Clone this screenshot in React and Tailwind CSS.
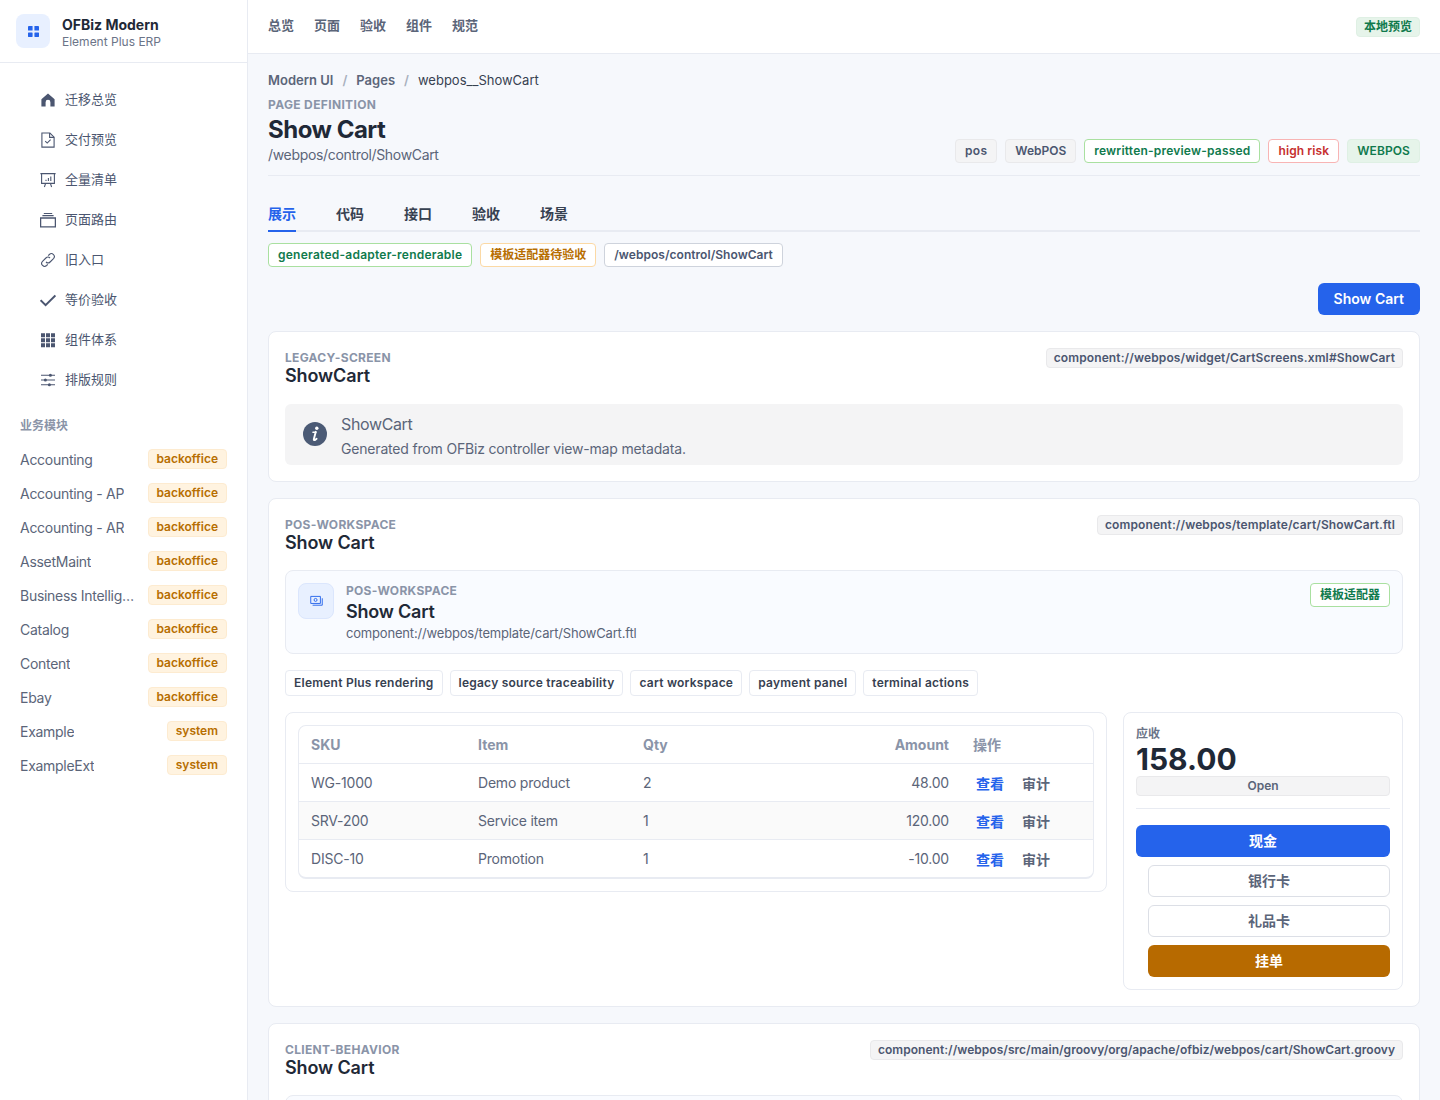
import React from "react";

const I = ({ children, vb = "0 0 16 16" }) => (
  <svg viewBox={vb} className="w-4 h-4 shrink-0 text-[#4b5670]" fill="none" stroke="currentColor" strokeWidth="1.1">
    {children}
  </svg>
);

const icons = [
  <I><path d="M8 1.5 14.6 7.2v7.3H10.4V10.2a2.4 2.4 0 0 0-4.8 0v4.3H1.4V7.2Z" fill="currentColor" stroke="none" /></I>,
  <I><path d="M1.9 1h8l4.2 4.2v9.9H1.9Z" /><path d="M9.6 1v4.4h4.5" /><path d="m5.2 9.2 2 1.9 3.4-3.4" /></I>,
  <I><path d="M.4 1.6h15.2M1.6 1.6v9.8h12.8V1.6M5.6 11.4 4.4 15M10.4 11.4l1.2 3.6" /><path d="M6 9V7.8M8.4 9V6M10.8 9V4.6" /></I>,
  <I><path d="M.6 6h14.8v8.8H.6Z" strokeWidth="1.3" /><path d="M2.4 3.6h11.2M3.8 1.5h8.4" /></I>,
  <I><path d="M6 10a2.9 2.9 0 0 0 4.1 0l3.4-3.4a2.9 2.9 0 0 0-4.1-4.1L8.2 3.7" /><path d="M10 6a2.9 2.9 0 0 0-4.1 0L2.5 9.4a2.9 2.9 0 0 0 4.1 4.1l1.2-1.2" /></I>,
  <I><path d="m.6 8.2 5 5L15.4 3.4" strokeWidth="2" /></I>,
  <I><path d="M1 1.2h4v4H1ZM6 1.2h4v4H6ZM11 1.2h4v4h-4ZM1 6.2h4v4H1ZM6 6.2h4v4H6ZM11 6.2h4v4h-4ZM1 11.2h4v4H1ZM6 11.2h4v4H6ZM11 11.2h4v4h-4Z" fill="currentColor" stroke="none" /></I>,
  <I><path d="M1 3.2h14M1 8h14M1 12.8h14" /><circle cx="10.4" cy="3.2" r="1.5" fill="currentColor" stroke="none" /><circle cx="5.4" cy="8" r="1.5" fill="currentColor" stroke="none" /><circle cx="9.4" cy="12.8" r="1.5" fill="currentColor" stroke="none" /></I>,
];

const menu = ["迁移总览", "交付预览", "全量清单", "页面路由", "旧入口", "等价验收", "组件体系", "排版规则"];
const modules = [
  ["Accounting", "backoffice"], ["Accounting - AP", "backoffice"], ["Accounting - AR", "backoffice"],
  ["AssetMaint", "backoffice"], ["Business Intelligence", "backoffice"], ["Catalog", "backoffice"],
  ["Content", "backoffice"], ["Ebay", "backoffice"], ["Example", "system"], ["ExampleExt", "system"],
];
const rows = [
  ["WG-1000", "Demo product", "2", "48.00"],
  ["SRV-200", "Service item", "1", "120.00"],
  ["DISC-10", "Promotion", "1", "-10.00"],
];

function Sidebar() {
  return (
    <aside className="w-[248px] shrink-0 h-screen bg-white border-r border-[#e8ebf2] flex flex-col">
      <div className="h-[63px] shrink-0 border-b border-[#e8ebf2] flex items-center gap-3 pl-4">
        <div className="w-[34px] h-[34px] rounded-lg bg-[#e8f0ff] flex items-center justify-center">
          <svg viewBox="0 0 12 12" className="w-[11px] h-[11px] text-[#2563eb]" fill="currentColor">
            <rect x="0" y="0" width="5" height="5" rx=".5" /><rect x="7" y="0" width="5" height="5" rx=".5" />
            <rect x="0" y="7" width="5" height="5" rx=".5" /><rect x="7" y="7" width="5" height="5" rx=".5" />
          </svg>
        </div>
        <div className="pt-[2px]">
          <div className="text-sm font-bold leading-[18px] text-[#1f2937]">OFBiz Modern</div>
          <div className="text-xs leading-[15px] text-[#6b7488]">Element Plus ERP</div>
        </div>
      </div>
      <nav className="pt-[17px]">
        {menu.map((m, i) => (
          <div key={m} className="h-10 pl-10 flex items-center gap-[9px] text-[13px] text-[#4b5670]">
            {icons[i]}
            <span>{m}</span>
          </div>
        ))}
      </nav>
      <div className="px-5 pt-[18px] pb-[9px] text-xs font-semibold leading-[16px] text-[#8a94a8]">业务模块</div>
      <div className="pl-5 pr-5">
        {modules.map(([n, b]) => (
          <div key={n} className="h-[34px] flex items-center justify-between gap-3">
            <span className="text-sm tracking-[-0.28px] text-[#5b6579] truncate">{n}</span>
            <span className="shrink-0 h-5 px-2 rounded bg-[#fff3e0] border border-[#fdebd0] text-xs font-semibold leading-[17px] text-[#b76e00] -translate-y-px">{b}</span>
          </div>
        ))}
      </div>
    </aside>
  );
}

const Tag = ({ className, children }) => (
  <span className={"h-6 px-[9px] rounded border text-xs font-semibold leading-[22px] whitespace-nowrap " + className}>{children}</span>
);

const SoftGray = "bg-[#f4f4f5] border-[#e9e9eb] text-[#4b5670]";
const Path = ({ children, className }) => (
  <span className={"h-5 px-[7px] rounded bg-[#f4f4f5] border border-[#e9e9eb] text-xs font-semibold leading-[18px] text-[#4b5670] whitespace-nowrap " + className}>{children}</span>
);

const CardHead = ({ label, title, path, pathClass }) => (
  <div className="flex items-start justify-between">
    <div>
      <div className="text-xs font-bold tracking-[0.3px] leading-[16px] text-[#8a94a8] mt-[2px]">{label}</div>
      <div className="text-lg font-semibold tracking-[-0.12px] leading-[22px] -mt-[1px] text-[#1f2937]">{title}</div>
    </div>
    <Path className={pathClass}>{path}</Path>
  </div>
);

function Workspace() {
  return (
    <div className="mt-[16px] flex gap-4 items-start">
      <div className="flex-1 min-w-0 rounded-lg border border-[#e8ebf2] bg-white p-3">
        <div className="rounded-lg border border-[#e8ebf2] border-b-2 overflow-hidden">
          <table className="w-full table-fixed text-sm tracking-[-0.2px] text-[#5b6579]">
            <colgroup>
              <col className="w-[167px]" /><col className="w-[165px]" /><col className="w-[150px]" /><col className="w-[180px]" /><col />
            </colgroup>
            <thead>
              <tr className="h-[37px] border-b border-[#e8ebf2] text-[#8a94a8]">
                <th className="text-left font-bold tracking-[0px] px-3 pt-[2px]">SKU</th>
                <th className="text-left font-bold tracking-[0px] px-3 pt-[2px]">Item</th>
                <th className="text-left font-bold tracking-[0px] px-3 pt-[2px]">Qty</th>
                <th className="text-right font-bold tracking-[0px] px-3 pt-[2px]">Amount</th>
                <th className="text-left font-semibold tracking-[0px] px-3 pt-[2px]">操作</th>
              </tr>
            </thead>
            <tbody>
              {rows.map((r, i) => (
                <tr key={r[0]} className={"h-[38px] " + (i === 1 ? "bg-[#fafafa] " : "") + (i < 2 ? "border-b border-[#e8ebf2]" : "")}>
                  <td className="px-3 pt-[2px]">{r[0]}</td>
                  <td className="px-3 pt-[2px]">{r[1]}</td>
                  <td className="px-3 pt-[2px]">{r[2]}</td>
                  <td className="px-3 pt-[2px] text-right">{r[3]}</td>
                  <td className="px-3 pt-[2px]">
                    <div className="flex gap-[18px] pl-[3px] font-semibold tracking-[0px] pt-[2px]">
                      <span className="text-[#2563eb]">查看</span>
                      <span className="text-[#5b6579]">审计</span>
                    </div>
                  </td>
                </tr>
              ))}
            </tbody>
          </table>
        </div>
      </div>
      <div className="w-[280px] shrink-0 rounded-lg border border-[#e8ebf2] bg-white p-3">
        <div className="text-xs font-semibold leading-[16px] text-[#6b7488] mt-[1px]">应收</div>
        <div className="text-[30px] font-bold leading-[34px] text-[#1f2937]">158.00</div>
        <div className="h-5 rounded bg-[#f4f4f5] border border-[#e9e9eb] text-xs font-semibold leading-[18px] text-center text-[#5b6579]">Open</div>
        <div className="h-px bg-[#e8ebf2] mt-3 mb-4" />
        <div className="h-8 rounded-md bg-[#2563eb] text-white text-sm font-semibold flex items-center justify-center">现金</div>
        <div className="ml-3 mt-2 h-8 rounded-md bg-white border border-[#dcdfe6] text-[#5b6579] text-sm font-semibold flex items-center justify-center">银行卡</div>
        <div className="ml-3 mt-2 h-8 rounded-md bg-white border border-[#dcdfe6] text-[#5b6579] text-sm font-semibold flex items-center justify-center">礼品卡</div>
        <div className="ml-3 mt-2 h-8 rounded-md bg-[#b76a00] text-white text-sm font-semibold flex items-center justify-center">挂单</div>
      </div>
    </div>
  );
}

function Main() {
  return (
    <div className="flex-1 min-w-0 h-screen overflow-hidden bg-[#f6f8fc] flex flex-col">
      <header className="h-[54px] shrink-0 bg-white border-b border-[#e8ebf2] px-5 flex items-center justify-between">
        <div className="flex gap-5 -mt-[1px] text-[13px] font-semibold text-[#5b6579]">
          {["总览", "页面", "验收", "组件", "规范"].map((t) => <span key={t}>{t}</span>)}
        </div>
        <span className="h-5 px-[7px] rounded bg-[#e6f4ea] border border-[#dff0e4] text-xs font-semibold leading-[18px] text-[#107a4d]">本地预览</span>
      </header>
      <main className="px-5 pt-[17px]">
        <div className="flex items-center text-[13px] leading-[18px]">
          <span className="font-semibold text-[#5b6579]">Modern UI</span>
          <span className="mx-[9px] text-[#a8b0be] font-semibold">/</span>
          <span className="font-semibold text-[#5b6579]">Pages</span>
          <span className="mx-[9px] text-[#a8b0be] font-semibold">/</span>
          <span className="text-[#374151]">webpos__ShowCart</span>
        </div>
        <div className="flex items-end justify-between pb-[10px] border-b border-[#e8ebf2]">
          <div>
            <div className="mt-[8px] text-xs font-bold tracking-[0.35px] leading-[16px] text-[#8a94a8]">PAGE DEFINITION</div>
            <h1 className="text-2xl font-bold tracking-[-0.5px] leading-[28px] mt-[3px] text-[#1f2937]">Show Cart</h1>
            <div className="text-sm tracking-[-0.33px] leading-[20px] mt-[1px] text-[#5b6579]">/webpos/control/ShowCart</div>
          </div>
          <div className="flex gap-2 mb-[2px]">
            <Tag className={SoftGray + " tracking-[0.3px]"}>pos</Tag>
            <Tag className={SoftGray}>WebPOS</Tag>
            <Tag className="bg-white border-[#a9e0a0] text-[#107a4d] tracking-[0.2px]">rewritten-preview-passed</Tag>
            <Tag className="bg-white border-[#f8b4b4] text-[#c62f2f] tracking-[0.1px]">high risk</Tag>
            <Tag className="bg-[#e6f4ea] border-[#dff0e4] text-[#107a4d] tracking-[0.1px]">WEBPOS</Tag>
          </div>
        </div>
        <div className="mt-5 flex gap-10 border-b-2 border-[#e8ebf2] h-[36px]">
          {["展示", "代码", "接口", "验收", "场景"].map((t, i) => (
            <div key={t} className={"h-[36px] leading-[36px] text-sm font-semibold " + (i === 0 ? "text-[#2563eb] border-b-2 border-[#2563eb]" : "text-[#374151]")}>{t}</div>
          ))}
        </div>
        <div className="mt-[11px] flex gap-2">
          <Tag className="bg-white border-[#a9e0a0] text-[#107a4d] tracking-[0.24px]">generated-adapter-renderable</Tag>
          <Tag className="bg-white border-[#fbd9a5] text-[#b76e00]">模板适配器待验收</Tag>
          <Tag className="bg-white border-[#ced3dc] text-[#4b5670] tracking-[0.04px]">/webpos/control/ShowCart</Tag>
        </div>
        <div className="mt-4 flex justify-end">
          <div className="h-8 px-4 rounded-md bg-[#2563eb] text-white text-sm font-semibold flex items-center">Show Cart</div>
        </div>

        <section className="mt-4 rounded-lg border border-[#e8ebf2] bg-white p-4">
          <CardHead label="LEGACY-SCREEN" title="ShowCart" path="component://webpos/widget/CartScreens.xml#ShowCart" pathClass="tracking-[0.12px]" />
          <div className="mt-[17px] h-[61px] rounded-md bg-[#f4f4f5] flex items-center gap-[14px] px-[18px]">
            <svg viewBox="0 0 24 24" className="w-6 h-6 shrink-0 -mt-[1px]">
              <circle cx="12" cy="12" r="12" fill="#4b5a75" />
              <circle cx="13.8" cy="6.2" r="1.7" fill="#fff" />
              <path d="M12.8 9.8 10.8 17.2c-.2.9.7 1.1 1.3.7l1.5-1.1" stroke="#fff" strokeWidth="1.9" fill="none" strokeLinecap="round" />
              <path d="M10 10.2h2.8" stroke="#fff" strokeWidth="1.6" strokeLinecap="round" />
            </svg>
            <div className="pt-[2px]">
              <div className="text-base tracking-[-0.37px] leading-[24px] text-[#5b6579]">ShowCart</div>
              <div className="text-sm tracking-[-0.18px] leading-[22px] mt-[2px] text-[#5b6579]">Generated from OFBiz controller view-map metadata.</div>
            </div>
          </div>
        </section>

        <section className="mt-4 rounded-lg border border-[#e8ebf2] bg-white p-4 pb-[16px]">
          <CardHead label="POS-WORKSPACE" title="Show Cart" path="component://webpos/template/cart/ShowCart.ftl" pathClass="tracking-[0.11px]" />
          <div className="mt-[16px] h-[84px] rounded-lg border border-[#e8ebf2] bg-[#f9fbff] px-3 pt-3 flex items-start gap-3">
            <div className="w-9 h-9 rounded-lg bg-[#e8f0ff] border border-[#dbe6fd] flex items-center justify-center shrink-0">
              <svg viewBox="0 0 14 14" className="w-[13px] h-[13px] text-[#2563eb]" fill="none" stroke="currentColor" strokeWidth="1">
                <path d="M.8 1.5h10.4v7.6H.8Z" /><circle cx="6" cy="5.3" r="1.6" /><path d="M2.8 11h10.4V3.5" />
              </svg>
            </div>
            <div className="flex-1 min-w-0">
              <div className="text-xs font-bold tracking-[0.3px] leading-[16px] text-[#8a94a8]">POS-WORKSPACE</div>
              <div className="text-lg font-semibold tracking-[-0.2px] leading-[24px] mt-[1px] text-[#1f2937]">Show Cart</div>
              <div className="text-[13px] tracking-[-0.18px] leading-[18px] text-[#5b6579]">component://webpos/template/cart/ShowCart.ftl</div>
            </div>
            <Tag className="bg-white border-[#a9e0a0] text-[#107a4d]">模板适配器</Tag>
          </div>
          <div className="mt-4 flex gap-[7px]">
            {["Element Plus rendering", "legacy source traceability", "cart workspace", "payment panel", "terminal actions"].map((t) => (
              <span key={t} className="h-[26px] px-2 rounded border border-[#e8ebf2] bg-white text-xs font-semibold tracking-[0.24px] leading-[24px] text-[#374151] whitespace-nowrap">{t}</span>
            ))}
          </div>
          <Workspace />
        </section>

        <section className="mt-4 rounded-lg border border-[#e8ebf2] bg-white p-4">
          <CardHead label="CLIENT-BEHAVIOR" title="Show Cart" path="component://webpos/src/main/groovy/org/apache/ofbiz/webpos/cart/ShowCart.groovy" pathClass="tracking-[0.04px]" />
          <div className="mt-[16px] h-[84px] rounded-lg border border-[#e8ebf2] bg-[#f9fbff]" />
        </section>
      </main>
    </div>
  );
}

export default function App() {
  return (
    <div className="flex h-screen overflow-hidden font-['Inter','Noto_Sans_CJK_SC',sans-serif]">
      <Sidebar />
      <Main />
    </div>
  );
}
